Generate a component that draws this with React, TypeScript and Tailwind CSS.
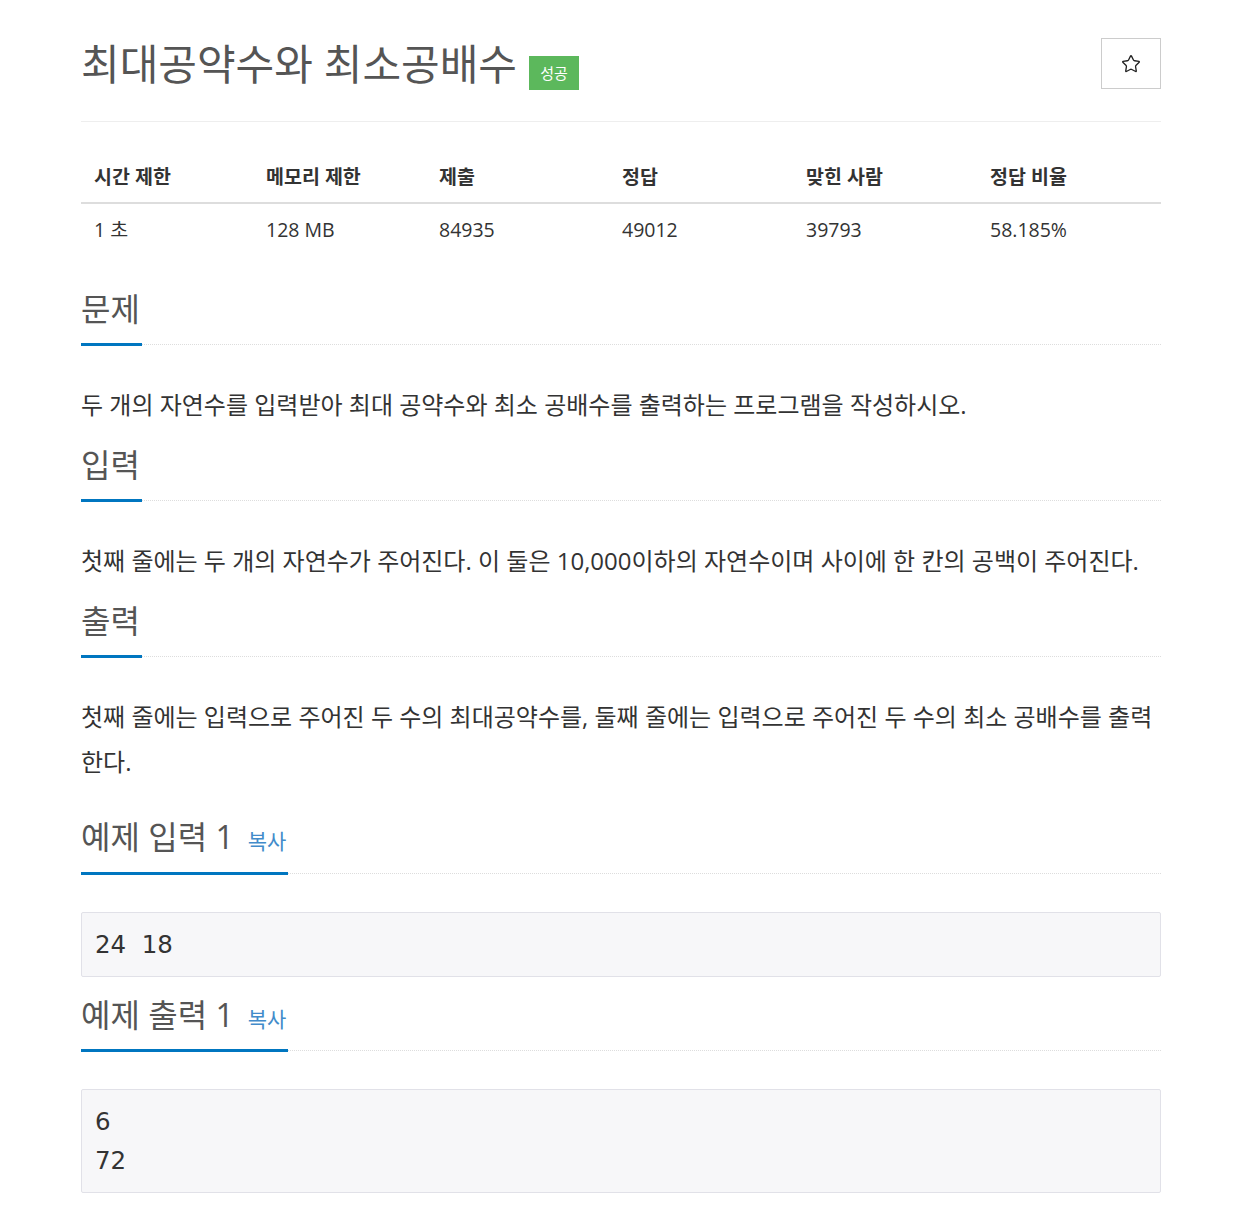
import { Star } from 'lucide-react';

const stats = [
  { label: '시간 제한', value: '1 초', w: 'w-[172px]' },
  { label: '메모리 제한', value: '128 MB', w: 'w-[173px]' },
  { label: '제출', value: '84935', w: 'w-[183px]' },
  { label: '정답', value: '49012', w: 'w-[184px]' },
  { label: '맞힌 사람', value: '39793', w: 'w-[184px]' },
  { label: '정답 비율', value: '58.185%', w: 'w-[184px]' },
];

const font = { fontFamily: '"Open Sans", "Noto Sans CJK KR", sans-serif' };

function SectionHeading({ title, copy, mt }: { title: string; copy?: boolean; mt: string }) {
  return (
    <div className={`flex items-end ${mt}`}>
      <div className="border-b-[3px] border-[#0076c0] pb-[14px] pr-[2px]">
        <span className="text-[32px] leading-[40px] text-[#555]">{title}</span>
        {copy && <span className="ml-[14px] text-[21px] text-[#428bca]">복사</span>}
      </div>
      <div className="flex-1 border-b border-dotted border-[#ddd] mb-[1px]" />
    </div>
  );
}

function Paragraph({ children }: { children: React.ReactNode }) {
  return <p className="mt-[36px] text-[24px] leading-[45px] text-[#333]">{children}</p>;
}

function SampleBox({ lines }: { lines: string[] }) {
  return (
    <pre
      className="mt-[37px] border border-[#e1e1e8] bg-[#f7f7f9] px-[13px] py-[12px] text-[24.5px] leading-[39px] text-[#333] rounded-[2px]"
      style={{ fontFamily: '"DejaVu Sans", sans-serif' }}
    >
      {lines.join('\n')}
    </pre>
  );
}

export default function App() {
  return (
    <div className="min-h-[1225px] bg-white" style={font}>
      <div className="w-[1080px] ml-[81px] pt-[37px] pb-[30px]">
        <div className="flex items-center justify-between">
          <div className="flex items-center">
            <h1 className="text-[42px] leading-[51px] text-[#555] font-normal">최대공약수와 최소공배수</h1>
            <span className="ml-[12px] mt-[19px] inline-flex h-[34px] w-[50px] items-center justify-center bg-[#5cb85c] text-[15px] text-white">
              성공
            </span>
          </div>
          <button className="flex h-[51px] w-[60px] items-center justify-center border border-[#ccc] bg-white">
            <Star size={20} strokeWidth={1.6} className="text-[#222]" />
          </button>
        </div>
        <div className="mt-[31px] border-b border-[#eee]" />

        <table className="mt-[29px] w-full text-left text-[19.5px] text-[#333]">
          <thead>
            <tr className="border-b-2 border-[#ddd]">
              {stats.map((s) => (
                <th key={s.label} className={`${s.w} px-[13px] py-[13px] font-bold leading-[25px]`}>
                  {s.label}
                </th>
              ))}
            </tr>
          </thead>
          <tbody>
            <tr>
              {stats.map((s) => (
                <td key={s.label} className="px-[13px] py-[13px] leading-[25px]">
                  {s.value}
                </td>
              ))}
            </tr>
          </tbody>
        </table>

        <SectionHeading title="문제" mt="mt-[34px]" />
        <Paragraph>두 개의 자연수를 입력받아 최대 공약수와 최소 공배수를 출력하는 프로그램을 작성하시오.</Paragraph>
        <SectionHeading title="입력" mt="mt-[18px]" />
        <Paragraph>첫째 줄에는 두 개의 자연수가 주어진다. 이 둘은 10,000이하의 자연수이며 사이에 한 칸의 공백이 주어진다.</Paragraph>
        <SectionHeading title="출력" mt="mt-[18px]" />
        <Paragraph>
          첫째 줄에는 입력으로 주어진 두 수의 최대공약수를, 둘째 줄에는 입력으로 주어진 두 수의 최소 공배수를 출력한다.
        </Paragraph>
        <SectionHeading title="예제 입력 1" copy mt="mt-[33px]" />
        <SampleBox lines={['24  18']} />
        <SectionHeading title="예제 출력 1" copy mt="mt-[18px]" />
        <SampleBox lines={['6', '72']} />
      </div>
    </div>
  );
}
